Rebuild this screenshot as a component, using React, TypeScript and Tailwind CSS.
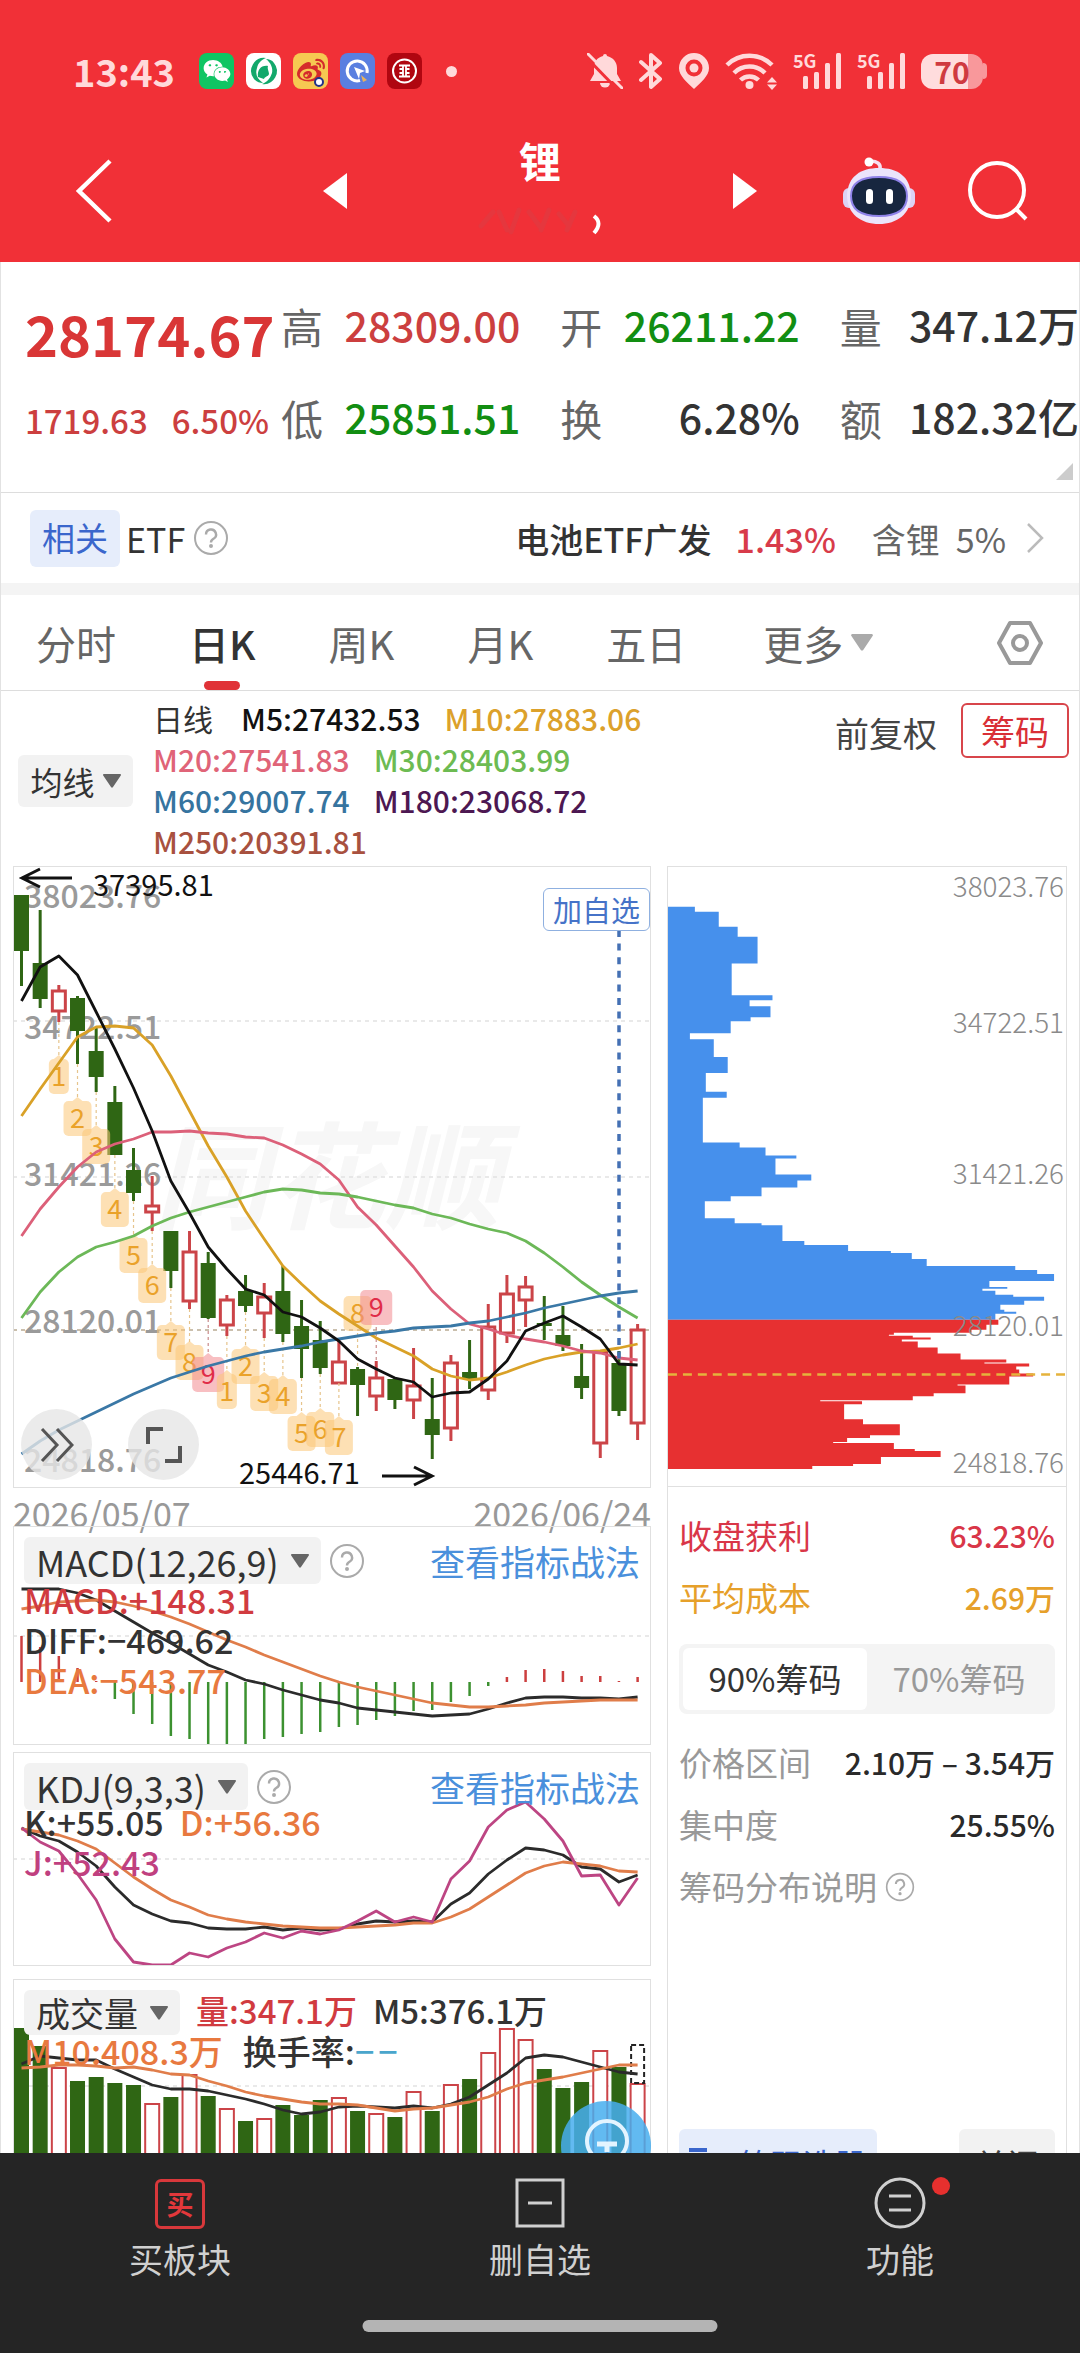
import type { ReactNode } from 'react'
import { FaWeibo, FaWeixin } from 'react-icons/fa'

type Candle = [high: number, top: number, bottom: number, low: number, up: 0 | 1]

const STEP = 18.67
const xAt = (i: number) => 8.5 + i * STEP

const CANDLES: Candle[] = [
  [29, 29, 85, 120, 0], [44, 97, 133, 142, 0], [119, 125, 145, 156, 1], [130, 132, 165, 198, 0],
  [161, 185, 211, 226, 0], [220, 236, 289, 289, 0], [282, 304, 327, 335, 0], [310, 340, 346, 365, 1],
  [365, 365, 405, 422, 0], [365, 386, 435, 443, 1], [386, 397, 452, 453, 0], [429, 434, 459, 470, 1],
  [409, 425, 440, 446, 0], [417, 431, 447, 472, 1], [400, 425, 468, 476, 0], [434, 460, 483, 512, 0],
  [455, 474, 502, 508, 0], [472, 496, 517, 517, 1], [501, 503, 519, 550, 0], [495, 512, 530, 545, 1],
  [512, 513, 534, 543, 0], [482, 520, 534, 553, 1], [512, 553, 569, 593, 0], [489, 497, 562, 575, 1],
  [474, 506, 513, 523, 0], [438, 461, 524, 534, 1], [409, 428, 467, 477, 1], [410, 421, 434, 461, 1],
  [430, 457, 460, 474, 0], [440, 469, 480, 485, 0], [478, 510, 522, 533, 0], [486, 486, 577, 592, 1],
  [485, 497, 545, 550, 0], [458, 464, 557, 574, 1],
]

const MA_LINES = [
  { color: '#d9a127', ys: [250, 223, 197, 171, 161, 160, 162, 179, 210, 245, 280, 311, 345, 373, 400, 418, 435, 448, 460, 472, 481, 490, 503, 510, 514, 512, 506, 499, 493, 489, 486, 485, 482, 478] },
  { color: '#dc6079', ys: [370, 343, 321, 301, 286, 278, 273, 266, 266, 265, 267, 268, 271, 272, 279, 288, 298, 314, 341, 359, 380, 401, 425, 443, 458, 463, 469, 473, 476, 480, 485, 487, 492, 494] },
  { color: '#6cb858', ys: [452, 426, 406, 391, 381, 376, 370, 360, 352, 346, 341, 336, 331, 326, 323, 324, 327, 328, 331, 335, 339, 342, 348, 352, 358, 363, 367, 375, 387, 401, 416, 429, 441, 452] },
  { color: '#3a78a6', ys: [588, 575, 564, 555, 546, 537, 528, 520, 512, 506, 500, 495, 490, 486, 483, 480, 476, 473, 470, 467, 465, 462, 461, 460, 457, 455, 451, 447, 442, 438, 434, 430, 427, 425] },
  { color: '#111111', ys: [135, 101, 90, 109, 146, 183, 222, 265, 315, 347, 381, 403, 423, 429, 446, 451, 462, 475, 493, 503, 512, 516, 531, 527, 526, 513, 495, 465, 457, 450, 461, 473, 498, 499] },
]

const COUNTS: { i: number; n: number; y: number; above?: boolean }[] = [
  { i: 2, n: 1, y: 190 }, { i: 3, n: 2, y: 232 }, { i: 4, n: 3, y: 260 }, { i: 5, n: 4, y: 323 },
  { i: 6, n: 5, y: 369 }, { i: 7, n: 6, y: 399 }, { i: 8, n: 7, y: 456 }, { i: 9, n: 8, y: 476 },
  { i: 10, n: 9, y: 488 }, { i: 11, n: 1, y: 505 }, { i: 12, n: 2, y: 480 }, { i: 13, n: 3, y: 507 },
  { i: 14, n: 4, y: 510 }, { i: 15, n: 5, y: 547 }, { i: 16, n: 6, y: 543 }, { i: 17, n: 7, y: 551 },
  { i: 18, n: 8, y: 430, above: true }, { i: 19, n: 9, y: 424, above: true },
]

const AXIS = [
  { label: '38023.76', y: 42, chipY: 30 },
  { label: '34722.51', y: 173, chipY: 167 },
  { label: '31421.26', y: 320, chipY: 319 },
  { label: '28120.01', y: 467, chipY: 471 },
  { label: '24818.76', y: 606, chipY: 609 },
]

const MACD_ZERO = 156
const MACD_BARS = [110, 121, 130, 142, 155, 173, 188, 198, 210, 213, 219, 219, 218, 213, 211, 208, 206, 201, 199, 194, 190, 185, 184, 176, 170, 160, 151, 144, 143, 145, 150, 150, 155, 151]
const DIFF = [63, 63, 63, 67, 74, 85, 96, 107, 117, 128, 139, 146, 154, 158, 164, 169, 174, 177, 182, 184, 186, 188, 190, 189, 188, 183, 177, 172, 171, 171, 172, 172, 173, 171]
const DEA = [83, 80, 76, 75, 74, 76, 80, 85, 91, 98, 106, 114, 121, 129, 136, 143, 150, 156, 161, 165, 169, 173, 177, 179, 181, 181, 180, 179, 177, 176, 175, 174, 174, 174]

const KDJ_K = [76, 84, 89, 100, 114, 135, 153, 162, 169, 171, 176, 177, 177, 175, 178, 176, 178, 177, 172, 169, 170, 169, 170, 152, 141, 122, 108, 96, 98, 103, 115, 117, 130, 123]
const KDJ_D = [77, 80, 83, 89, 97, 111, 125, 137, 148, 155, 163, 167, 170, 172, 174, 175, 176, 176, 175, 174, 173, 171, 171, 165, 157, 145, 133, 121, 114, 110, 112, 114, 119, 120]
const KDJ_J = [76, 90, 99, 122, 148, 187, 210, 213, 213, 201, 205, 196, 190, 181, 186, 179, 182, 178, 169, 159, 170, 165, 170, 127, 109, 75, 58, 50, 67, 89, 124, 123, 153, 126]

const VOLUME = [49, 67, 89, 102, 98, 104, 106, 125, 118, 96, 117, 130, 142, 140, 126, 136, 121, 119, 132, 135, 138, 113, 132, 106, 100, 74, 50, 61, 90, 109, 103, 72, 88, 105]
const VOL_M5 = [85, 77, 79, 81, 81, 90, 98, 106, 110, 110, 112, 116, 120, 125, 131, 135, 133, 128, 127, 128, 129, 127, 129, 125, 118, 106, 94, 79, 76, 78, 83, 88, 93, 95]
const VOL_M10 = [89, 88, 86, 86, 87, 89, 88, 91, 95, 96, 102, 107, 113, 117, 120, 123, 125, 125, 126, 129, 132, 130, 129, 126, 123, 118, 110, 104, 101, 98, 94, 90, 86, 86]

// [start y, width] of every price level in the chip distribution
const CHIPS_LOSS = [[40, 27], [45, 51], [60, 70], [70, 90], [97, 64], [129, 105], [134, 82], [140, 103], [151, 83], [155, 63], [167, 22], [173, 46], [191, 60], [207, 38], [226, 59], [232, 35], [277, 72], [282, 98], [290, 129], [293, 108], [309, 144], [315, 130], [322, 94], [331, 63], [336, 37], [353, 67], [358, 94], [360, 115], [376, 137], [380, 181], [386, 224], [388, 245], [394, 260], [401, 349], [405, 371], [409, 388], [416, 323], [422, 341], [424, 316], [426, 329], [430, 347], [432, 378], [436, 358], [440, 334], [445, 338], [447, 350], [449, 329]]
const CHIPS_GAIN = [[455, 332], [460, 320], [465, 305], [468, 227], [470, 222], [471, 246], [473, 264], [475, 235], [477, 251], [483, 271], [489, 294], [495, 340], [498, 318], [499, 363], [502, 350], [505, 353], [509, 367], [512, 343], [520, 291], [521, 299], [529, 267], [532, 246], [536, 153], [537, 195], [540, 177], [555, 196], [560, 233], [571, 203], [574, 180], [578, 166], [579, 227], [585, 248], [587, 274], [593, 214], [600, 186], [602, 145]]

const QUOTES = [
  [{ label: '高', value: '28309.00', cls: 'text-[#cc3f3f]' }, { label: '低', value: '25851.51', cls: 'text-[#128e12]' }],
  [{ label: '开', value: '26211.22', cls: 'text-[#128e12]' }, { label: '换', value: '6.28%', cls: 'text-[#333333]' }],
  [{ label: '量', value: '347.12万', cls: 'text-[#333333]' }, { label: '额', value: '182.32亿', cls: 'text-[#333333]' }],
]

const TABS = ['分时', '日K', '周K', '月K', '五日']

function chipPath(levels: number[][], end: number) {
  let d = `M0 ${levels[0][0]}`
  levels.forEach(([y, w], i) => {
    const next = i + 1 < levels.length ? levels[i + 1][0] : end
    d += `L${w} ${y}L${w} ${next}`
  })
  return `${d}L0 ${end}Z`
}

function Line({ ys, color, width = 2.8 }: { ys: number[]; color: string; width?: number }) {
  return (
    <polyline
      points={ys.map((y, i) => `${xAt(i)},${y}`).join(' ')}
      fill="none"
      stroke={color}
      strokeWidth={width}
      strokeLinejoin="round"
    />
  )
}

function GridLine({ y, color = '#e2e2e2' }: { y: number; color?: string }) {
  return <line x1="0" x2="638" y1={y} y2={y} stroke={color} strokeWidth="1.5" strokeDasharray="4 4" />
}

function Caret({ className = 'w-[18px] text-[#666666]' }: { className?: string }) {
  return (
    <svg viewBox="0 0 18 14" className={className} fill="currentColor" aria-hidden="true">
      <path d="M1 0h16a1 1 0 0 1 .8 1.500L10 13a1.200 1.200 0 0 1-2 0L.2 1.500A1 1 0 0 1 1 0z" />
    </svg>
  )
}

function Help({ label, className = 'size-9' }: { label: string; className?: string }) {
  return (
    <button aria-label={label} className={`shrink-0 text-[#aaaaaa] ${className}`}>
      <svg viewBox="0 0 36 36" fill="none" stroke="currentColor" strokeWidth="2">
        <circle cx="18" cy="18" r="16" />
        <path d="M13 14.500a5 5 0 1 1 7.500 4.300c-1.800 1-2.500 1.800-2.500 3.700" strokeWidth="2.400" />
        <circle cx="18" cy="26" r="1" fill="currentColor" />
      </svg>
    </button>
  )
}

function Signal() {
  return (
    <span className="relative block">
      <svg viewBox="0 0 48 38" className="h-[38px] w-12" fill="currentColor" aria-hidden="true">
        <rect x="10" y="24" width="5" height="13" rx="1.500" />
        <rect x="21" y="20" width="5" height="17" rx="1.500" />
        <rect x="32" y="11" width="5" height="26" rx="1.500" />
        <rect x="43" y="1" width="5" height="36" rx="1.500" />
      </svg>
      <span className="absolute -top-1 left-0 text-[18px] leading-6 font-bold">5G</span>
    </span>
  )
}

function StatusBar() {
  return (
    <div className="flex h-9 items-center justify-between pr-[93px] pl-[73px] text-[#ffd9da]">
      <div className="flex items-center gap-3">
        <span className="mr-[12px] text-[38px] leading-9 font-bold">13:43</span>
        <span className="flex h-9 w-[35px] items-center justify-center rounded-lg bg-[#0fc563]">
          <FaWeixin className="size-7 text-white" />
        </span>
        <svg viewBox="0 0 35 36" className="h-9 w-[35px]">
          <rect width="35" height="36" rx="8" fill="#fff" />
          <path d="M20 5A13 13 0 0 0 8 26c3 3 6 4 9 4-6-4-8-9-6-15 1-5 4-8 9-10z" fill="#12a86b" />
          <path d="M16 31a13 13 0 0 0 12-21c-2-3-5-4-8-4 5 4 7 9 6 14-2 6-5 9-10 11z" fill="#12a86b" />
          <path d="M12 24c-1-7 3-12 10-11-1 3 1 5 1 8-1 3-4 2-5 5-2-1-4-1-6-2z" fill="#12a86b" />
        </svg>
        <span className="relative flex h-9 w-[35px] items-center justify-center rounded-lg bg-[#f6c952]">
          <FaWeibo className="size-7 text-[#d52b2b]" />
          <span className="absolute right-1 bottom-0.5 size-2.5 rounded-full border-2 border-[#223388] bg-white" />
        </span>
        <svg viewBox="0 0 35 36" className="h-9 w-[35px]">
          <rect width="35" height="36" rx="8" fill="#5a7fe0" />
          <path d="M20 27.500A10 10 0 1 1 27 20" fill="none" stroke="#fff" strokeWidth="3" />
          <path d="M14 14l11 4-5 2-1 6z" fill="#fff" />
          <path d="M21 22l6 5-4 2z" fill="#e8b25c" />
        </svg>
        <svg viewBox="0 0 35 36" className="h-9 w-[35px]">
          <rect width="35" height="36" rx="8" fill="#b00610" />
          <circle cx="17.500" cy="18" r="11.500" fill="none" stroke="#fff" strokeWidth="2" />
          <path d="M12 12.500h11M12 23.500h11M12.500 16h3.500v4h-3.500M22.500 16h-3.500v4h3.500M16 12.500v3.500M19 12.500v3.500M16 20v3.500M19 20v3.500" fill="none" stroke="#fff" strokeWidth="1.800" />
        </svg>
        <span className="ml-3 size-[11px] rounded-full bg-[#ffd9da]" />
      </div>
      <div className="flex items-center gap-4">
        <svg viewBox="0 0 36 36" className="size-9" fill="currentColor" aria-hidden="true">
          <path d="M16 3a2 2 0 0 1 4 0c6 1.500 10 6 10 12v6l4 7H3l4-7v-6c0-6 3-10.500 9-12z" />
          <path d="M13 30h10a5 4.500 0 0 1-10 0z" />
          <path d="M-1 4l32 33" stroke="#f13037" strokeWidth="3" />
          <path d="M1 1l34 34" stroke="currentColor" strokeWidth="3" strokeLinecap="round" />
        </svg>
        <svg viewBox="0 0 24 38" className="h-[38px] w-6" fill="none" stroke="currentColor" strokeWidth="4" strokeLinejoin="round" strokeLinecap="round">
          <path d="M2 10l19 17-9 8V3l9 8L2 28" />
        </svg>
        <svg viewBox="0 0 30 36" className="h-9 w-[30px]" fill="currentColor" aria-hidden="true">
          <path fillRule="evenodd" d="M15 0a15 15 0 0 1 15 15c0 8-8 14-15 21C8 29 0 23 0 15A15 15 0 0 1 15 0zm0 6.500a8.500 8.500 0 1 0 0 17 8.500 8.500 0 0 0 0-17z" />
          <circle cx="15" cy="15" r="4.500" />
        </svg>
        <svg viewBox="0 0 52 38" className="h-[38px] w-[52px]" fill="none" stroke="currentColor" strokeWidth="4.500" aria-hidden="true">
          <path d="M2 13a32 32 0 0 1 45 0M9 21a22 22 0 0 1 31 0M15.500 28a13 13 0 0 1 18 0" />
          <circle cx="24.500" cy="33" r="4" fill="currentColor" stroke="none" />
          <path d="M47 25l5 5.500H42zM47 38l-5-5.500h10z" fill="currentColor" stroke="none" />
        </svg>
        <Signal />
        <Signal />
        <div className="flex items-center">
          <span className="flex h-[35px] w-[62px] items-center justify-center rounded-xl bg-linear-to-r from-[#ffdcdd] from-75% to-[#f8989b] to-75% text-[30px] leading-8 font-bold text-[#cf3a40]">
            70
          </span>
          <span className="h-4 w-1 rounded-r bg-[#f8989b]" />
        </div>
      </div>
    </div>
  )
}

function Robot() {
  return (
    <svg viewBox="0 0 74 68" className="h-[68px] w-[74px]" aria-hidden="true">
      <path d="M38 12c1-5-3-8-9-8" fill="none" stroke="#f6dff0" strokeWidth="3.500" />
      <circle cx="27" cy="5" r="4.500" fill="#fff" />
      <rect x="1" y="31" width="12" height="20" rx="6" fill="#dcd3f5" />
      <rect x="61" y="31" width="12" height="20" rx="6" fill="#dcd3f5" />
      <path d="M37 11c18 0 31 8 32 27 0 19-14 29-32 29S5 57 5 38c1-19 14-27 32-27z" fill="#ebe4fb" />
      <path d="M37 20c19 0 28 6 28 19s-9 20-28 20S9 52 9 39s9-19 28-19z" fill="#17263f" stroke="#8f82e8" strokeWidth="2" />
      <rect x="24" y="32" width="7" height="15" rx="3.500" fill="#fff" />
      <rect x="44" y="32" width="7" height="15" rx="3.500" fill="#fff" />
    </svg>
  )
}

function TitleBar() {
  return (
    <div className="grid h-[142px] grid-cols-[1fr_434px_1fr] items-center text-white">
      <button aria-label="返回" className="ml-[75px] justify-self-start">
        <svg viewBox="0 0 38 64" className="h-16 w-[38px]" fill="none" stroke="#fff" strokeWidth="4.500">
          <path d="M35 2L4 32l31 30" />
        </svg>
      </button>
      <div className="flex items-center justify-between">
        <button aria-label="上一个">
          <svg viewBox="0 0 24 36" className="h-9 w-6" fill="#fff"><path d="M24 0v36L0 18z" /></svg>
        </button>
        <div className="flex flex-col items-center pb-3">
          <h1 className="text-[42px] leading-[60px] font-bold">锂</h1>
          <svg viewBox="0 0 130 50" className="h-[50px] w-[130px]" aria-hidden="true">
            <g fill="none" stroke="#b8555c" strokeWidth="5" opacity=".2" strokeLinecap="round">
              <path d="M6 36l12-14M24 22l8 18M44 20l-8 22M54 22l12 16M74 20l-8 20M84 24l10 12M100 22l-8 18" />
            </g>
            <path d="M119 26q9 7 0 17" fill="none" stroke="#fff" strokeWidth="4" />
          </svg>
        </div>
        <button aria-label="下一个">
          <svg viewBox="0 0 24 36" className="h-9 w-6" fill="#fff"><path d="M0 0v36l24-18z" /></svg>
        </button>
      </div>
      <div className="flex items-center justify-end gap-[52px] pr-[52px]">
        <button aria-label="智能助手"><Robot /></button>
        <button aria-label="搜索">
          <svg viewBox="0 0 60 60" className="size-[60px]" fill="none" stroke="#fff" strokeWidth="4">
            <circle cx="29" cy="29" r="27" />
            <path d="M48 48l10 10" />
          </svg>
        </button>
      </div>
    </div>
  )
}

function QuoteSummary() {
  return (
    <section className="relative flex border-b border-[#dddddd] pt-[17px] pb-[29px]">
      <div className="w-[256px] shrink-0 pl-6">
        <div className="flex h-23 items-center pt-4 text-[56px] font-bold text-[#d93636]">28174.67</div>
        <div className="flex h-23 items-center gap-6 pt-2 text-[33px] font-medium text-[#cc3f3f]">
          <span>1719.63</span>
          <span>6.50%</span>
        </div>
      </div>
      <div className="ml-6 grid flex-1 grid-cols-3 gap-x-10">
        {QUOTES.map((col) => (
          <dl key={col[0].label}>
            {col.map((q) => (
              <div key={q.label} className="flex h-23 items-center justify-between whitespace-nowrap">
                <dt className="text-[42px] text-[#666666]">{q.label}</dt>
                <dd className={`text-[41px] font-medium ${q.cls}`}>{q.value}</dd>
              </div>
            ))}
          </dl>
        ))}
      </div>
      <svg viewBox="0 0 17 17" className="absolute right-1.5 bottom-3 size-[17px]" fill="#cccccc" aria-hidden="true">
        <path d="M17 0v17H0z" />
      </svg>
    </section>
  )
}

function EtfRow() {
  return (
    <section className="flex h-[90px] items-center justify-between pr-[35px] pl-[29px] text-[34px] text-[#333333]">
      <div className="flex items-center">
        <span className="flex h-[57px] items-center rounded-md bg-[#e6edfb] px-3 text-[33px] text-[#3a66cc]">相关</span>
        <span className="ml-1.5">ETF</span>
        <Help label="ETF说明" className="ml-2 size-9" />
      </div>
      <a href="#etf" className="flex items-center whitespace-nowrap">
        <span className="font-medium">电池ETF广发</span>
        <span className="ml-6 font-medium text-[#d83b4a]">1.43%</span>
        <span className="ml-9 text-[#666666]">含锂</span>
        <span className="ml-4 text-[#666666]">5%</span>
        <svg viewBox="0 0 18 32" className="ml-5 h-8 w-[18px]" fill="none" stroke="#bbbbbb" strokeWidth="2.500" aria-hidden="true">
          <path d="M2 2l14 14L2 30" />
        </svg>
      </a>
    </section>
  )
}

function PeriodTabs() {
  return (
    <nav className="flex h-[96px] items-center border-b border-[#dddddd] px-[35px] text-[40px] text-[#666666]">
      <div className="flex h-full items-center gap-[73px]">
        {TABS.map((tab) => {
          const active = tab === '日K'
          return (
            <button
              key={tab}
              aria-pressed={active}
              className={`relative h-full whitespace-nowrap ${active ? 'font-medium text-[#333333]' : ''}`}
            >
              {tab}
              {active && <span className="absolute bottom-0 left-1/2 h-[9px] w-9 -translate-x-1/2 rounded-full bg-[#e03237]" />}
            </button>
          )
        })}
        <button className="flex h-full items-center gap-2 pl-1 whitespace-nowrap">
          更多
          <Caret className="w-[22px] text-[#aaaaaa]" />
        </button>
      </div>
      <button aria-label="设置" className="ml-auto">
        <svg viewBox="0 0 48 46" className="h-[46px] w-12" fill="none" stroke="#999999" strokeWidth="4" strokeLinejoin="round">
          <path d="M14 3h20l11 20-11 20H14L3 23z" />
          <circle cx="24" cy="23" r="7" />
        </svg>
      </button>
    </nav>
  )
}

function AverageLegend() {
  return (
    <section className="flex pt-[7px] pr-[10px] pb-[2px] pl-[17px]">
      <button className="mt-[57px] flex h-[52px] w-[115px] shrink-0 items-center justify-center gap-2 self-start rounded-md bg-[#f2f2f2] text-[32px] whitespace-nowrap text-[#333333]">
        均线
        <Caret />
      </button>
      <div className="ml-5 flex-1 text-[30px] leading-[41px] font-medium">
        <div className="flex gap-6">
          <span className="mr-1 font-normal text-[#333333]">日线</span>
          <span className="text-[#111111]">M5:27432.53</span>
          <span className="text-[#dca12b]">M10:27883.06</span>
        </div>
        <div className="flex gap-6 text-[#e06478]">
          <span>M20:27541.83</span>
          <span className="text-[#6dbb52]">M30:28403.99</span>
        </div>
        <div className="flex gap-6 text-[#36749f]">
          <span>M60:29007.74</span>
          <span className="text-[#4d1852]">M180:23068.72</span>
        </div>
        <div className="text-[#a8513f]">M250:20391.81</div>
      </div>
      <div className="flex items-start gap-6 pt-[5px] text-[34px] leading-[51px]">
        <button className="pt-1 text-[#444444]">前复权</button>
        <button className="rounded-md border-2 border-[#d8454b] px-[18px] text-[#d92f36]">筹码</button>
      </div>
    </section>
  )
}

function Count({ i, n, y, above }: { i: number; n: number; y: number; above?: boolean }) {
  const red = n === 9
  const w = n === 1 ? 20 : red ? 32 : 28
  const x = xAt(i)
  const low = CANDLES[i][3]
  return (
    <g>
      <line
        x1={x}
        x2={x}
        y1={above ? y + 37 : low}
        y2={above ? CANDLES[i][0] : y}
        stroke={red ? '#c98a8a' : '#e6c48c'}
        strokeWidth="1.200"
        strokeDasharray="3 3"
      />
      <rect x={x - w / 2} y={above ? y : y + 3} width={w} height="35" rx="5" fill={red ? '#f28b8f' : '#fbc777'} opacity=".55" />
      {!above && <path d={`M${x - 5} ${y + 3}L${x} ${y - 1}L${x + 5} ${y + 3}z`} fill={red ? '#f28b8f' : '#fbc777'} opacity=".55" />}
      <text x={x} y={y + (above ? 27 : 30)} textAnchor="middle" fontSize="27" fill={red ? '#e02c48' : '#eaa22a'}>
        {n}
      </text>
    </g>
  )
}

function PriceChart() {
  return (
    <div className="relative outline-1 -outline-offset-1 outline-[#e0e0e0]">
      <svg viewBox="0 0 638 622" className="block w-full" role="img" aria-label="日K线图">
        <text x="140" y="354" fontSize="116" fontWeight="700" fontStyle="italic" fill="#f7f7f7">同花顺</text>
        <GridLine y={155} />
        <GridLine y={311} />
        <GridLine y={464} color="#b9ab93" />
        {AXIS.map((a) => (
          <text key={a.label} x="11" y={a.y} fontSize="32" fontWeight="500" fill="#9a9a9a">{a.label}</text>
        ))}
        {CANDLES.map(([high, top, bottom, low, up], i) => (
          <g key={i} stroke={up ? '#cb4448' : '#2f6614'} strokeWidth="3">
            <line x1={xAt(i)} x2={xAt(i)} y1={high} y2={top} />
            <line x1={xAt(i)} x2={xAt(i)} y1={bottom} y2={low} />
            {up ? (
              <rect x={xAt(i) - 6.500} y={top} width="13" height={bottom - top} fill="#fff" />
            ) : (
              <rect x={xAt(i) - 7.500} y={top} width="15" height={bottom - top} fill="#2f6614" stroke="none" />
            )}
          </g>
        ))}
        {COUNTS.map((c) => (
          <Count key={c.i} {...c} />
        ))}
        {MA_LINES.map((l) => (
          <Line key={l.color} {...l} />
        ))}
        <line x1="606" x2="606" y1="64" y2="497" stroke="#4470b4" strokeWidth="3.500" strokeDasharray="7 6.600" />
        <g fontSize="29" fill="#111">
          <text x="80" y="30">37395.81</text>
          <text x="226" y="618">25446.71</text>
        </g>
        <g fill="none" stroke="#111" strokeWidth="3">
          <path d="M59 12H9M27 3L9 12l18 9" />
          <path d="M369 610h50M401 601l18 9-18 9" />
        </g>
      </svg>
      <button className="absolute top-[22px] right-[1px] flex h-[43px] items-center rounded-md border border-[#8fb0e0] bg-white px-[9px] text-[29px] text-[#4673c8]">
        加自选
      </button>
      <div className="absolute bottom-2 left-2 flex gap-9">
        <button aria-label="展开" className="flex size-[71px] items-center justify-center rounded-full bg-[#e6e6e6]/80">
          <svg viewBox="0 0 34 34" className="size-[34px]" fill="none" stroke="#555" strokeWidth="3">
            <path d="M2 1l15 16L2 33M17 1l15 16-15 16" />
          </svg>
        </button>
        <button aria-label="全屏" className="flex size-[71px] items-center justify-center rounded-full bg-[#e6e6e6]/80">
          <svg viewBox="0 0 36 36" className="size-9" fill="none" stroke="#555" strokeWidth="4">
            <path d="M2 17V2h15M34 19v15H19" />
          </svg>
        </button>
      </div>
    </div>
  )
}

function IndicatorPanel({ label, height, chart, children }: { label: string; height: number; chart: ReactNode; children: ReactNode }) {
  return (
    <div className="relative text-[34px] outline-1 -outline-offset-1 outline-[#e0e0e0]">
      <svg viewBox={`0 0 638 ${height}`} className="block w-full" role="img" aria-label={label}>
        {chart}
      </svg>
      <div className="absolute inset-x-0 top-0 px-[11px] pt-[11px]">{children}</div>
    </div>
  )
}

function IndicatorHeader({ name }: { name: string }) {
  return (
    <div className="flex items-center justify-between whitespace-nowrap">
      <div className="flex items-center gap-2">
        <button className="flex h-[47px] items-center gap-3 rounded-md bg-[#f2f2f2] px-3 text-[36px] text-[#333333]">
          {name}
          <Caret />
        </button>
        <Help label={`${name}说明`} />
      </div>
      <a href="#strategy" className="text-[35px] leading-[47px] text-[#4a90dc]">查看指标战法</a>
    </div>
  )
}

function MacdPanel() {
  return (
    <IndicatorPanel
      label="MACD"
      height={219}
      chart={
        <>
          <GridLine y={110} />
          {MACD_BARS.map((y, i) => (
            <line key={i} x1={xAt(i)} x2={xAt(i)} y1={MACD_ZERO} y2={y} stroke={y < MACD_ZERO ? '#cc3f3f' : '#3c9130'} strokeWidth="2.500" />
          ))}
          <Line ys={DIFF} color="#2b2b2b" />
          <Line ys={DEA} color="#e07d4a" />
        </>
      }
    >
      <IndicatorHeader name="MACD(12,26,9)" />
      <div className="-mt-1 leading-10 font-medium">
        <div className="text-[#d13b40]">MACD:+148.31</div>
        <div className="text-[#333333]">DIFF:−469.62</div>
        <div className="text-[#e8793f]">DEA:−543.77</div>
      </div>
    </IndicatorPanel>
  )
}

function KdjPanel() {
  return (
    <IndicatorPanel
      label="KDJ"
      height={214}
      chart={
        <>
          <GridLine y={107} />
          <Line ys={KDJ_K} color="#2b2b2b" />
          <Line ys={KDJ_D} color="#e07d4a" />
          <Line ys={KDJ_J} color="#bd4583" />
        </>
      }
    >
      <IndicatorHeader name="KDJ(9,3,3)" />
      <div className="-mt-2 leading-10 font-medium">
        <div className="flex gap-4">
          <span className="text-[#333333]">K:+55.05</span>
          <span className="text-[#e8793f]">D:+56.36</span>
        </div>
        <div className="text-[#c0407f]">J:+52.43</div>
      </div>
    </IndicatorPanel>
  )
}

function VolumePanel() {
  return (
    <IndicatorPanel
      label="成交量"
      height={214}
      chart={
        <>
          <GridLine y={107} />
          {VOLUME.map((y, i) =>
            CANDLES[i][4] ? (
              <rect key={i} x={xAt(i) - 7} y={y} width="14" height={214 - y} fill="#fff" stroke="#cb4448" strokeWidth="2" />
            ) : (
              <rect key={i} x={xAt(i) - 7.500} y={y} width="15" height={214 - y} fill="#2f6614" />
            ),
          )}
          <rect x={xAt(33) - 6.500} y="66" width="13" height="38" fill="none" stroke="#222" strokeWidth="2" strokeDasharray="5 3" />
          <Line ys={VOL_M5} color="#2b2b2b" />
          <Line ys={VOL_M10} color="#e07d4a" />
        </>
      }
    >
      <div className="flex items-start gap-4 whitespace-nowrap">
        <button className="flex h-[45px] items-center gap-3 rounded-md bg-[#f2f2f2] px-3 text-[#333333]">
          成交量
          <Caret />
        </button>
        <span className="text-[33px] leading-10 font-medium text-[#d13b40]">量:347.1万</span>
        <span className="text-[33px] leading-10 font-medium text-[#333333]">M5:376.1万</span>
      </div>
      <div className="-mt-1 flex gap-5 leading-10 font-medium">
        <span className="text-[#e8793f]">M10:408.3万</span>
        <span className="flex text-[#333333]">
          换手率:
          <span className="flex gap-1 text-[#4aa5cc]">
            <span>−</span>
            <span>−</span>
          </span>
        </span>
      </div>
      <button aria-label="快捷交易" className="absolute top-[122px] right-0 size-[90px] rounded-full bg-[#46aeef]/85">
        <svg viewBox="0 0 90 90" fill="none" stroke="#e3f4ff" strokeWidth="4">
          <circle cx="46" cy="40" r="20" />
          <path d="M36 43h20M46 43v8" strokeWidth="5" />
        </svg>
      </button>
    </IndicatorPanel>
  )
}

function ChipChart() {
  return (
    <svg viewBox="0 0 400 622" className="block w-full border-y border-[#e0e0e0]" role="img" aria-label="筹码分布">
      <path d={chipPath(CHIPS_LOSS, 455)} fill="#4690ec" />
      <path d={chipPath(CHIPS_GAIN, 605)} fill="#e73031" />
      <line x1="0" x2="400" y1="510" y2="510" stroke="#e5b33c" strokeWidth="2.500" strokeDasharray="9 6" />
      {AXIS.map((a) => (
        <text key={a.label} x="398" y={a.chipY} textAnchor="end" fontSize="28" fontWeight="300" fill="#8a8a8a">
          {a.label}
        </text>
      ))}
    </svg>
  )
}

function ChipRow({ label, value, cls }: { label: string; value: string; cls: string }) {
  return (
    <div className={`flex h-[62px] items-center justify-between whitespace-nowrap ${cls}`}>
      <dt className="text-[33px]">{label}</dt>
      <dd className="text-[30px] font-medium">{value}</dd>
    </div>
  )
}

function ChipColumn() {
  return (
    <aside className="border-x border-[#e0e0e0]">
      <ChipChart />
      <div className="px-[11px] pt-[18px]">
        <dl>
          <ChipRow label="收盘获利" value="63.23%" cls="text-[#d93648]" />
          <ChipRow label="平均成本" value="2.69万" cls="text-[#e6a02a]" />
        </dl>
        <div className="mt-[15px] mb-[18px] flex h-[70px] rounded-lg bg-[#f4f4f4] p-1 text-[33px] whitespace-nowrap">
          <button aria-pressed="true" className="flex-1 rounded-md bg-white text-[#333333]">90%筹码</button>
          <button aria-pressed="false" className="flex-1 text-[#999999]">70%筹码</button>
        </div>
        <dl className="text-[#999999]">
          <ChipRow label="价格区间" value="2.10万 – 3.54万" cls="[&>dd]:text-[#2a2a2a]" />
          <ChipRow label="集中度" value="25.55%" cls="[&>dd]:text-[#2a2a2a]" />
        </dl>
        <div className="flex h-[62px] items-center gap-2 text-[33px] text-[#999999]">
          筹码分布说明
          <Help label="筹码分布说明" className="size-[30px]" />
        </div>
        <div className="mt-[211px] flex justify-between text-[32px] whitespace-nowrap">
          <button className="flex h-[68px] items-center gap-5 rounded-md bg-[#e6edfb] px-2.5 text-[#3a66cc]">
            <svg viewBox="0 0 30 30" className="size-[30px]" fill="none" stroke="currentColor" strokeWidth="4">
              <path d="M0 2h18M0 14h24M0 26h12" />
            </svg>
            筹码选股
          </button>
          <button className="h-[68px] rounded-md bg-[#f2f2f2] px-4 text-[#444444]">关闭</button>
        </div>
      </div>
    </aside>
  )
}

function BottomNav() {
  return (
    <footer className="relative z-10 h-[200px] shrink-0 bg-[#252525] pt-6 text-[34px] text-[#d0d0d0]">
      <nav className="grid grid-cols-3">
        <button className="flex flex-col items-center gap-[5px]">
          <span className="mt-0.5 flex size-[50px] items-center justify-center rounded-md border-3 border-[#d8383b] text-[27px] leading-8 font-bold text-[#e2383b]">
            买
          </span>
          <span className="leading-[50px]">买板块</span>
        </button>
        <button className="flex flex-col items-center gap-[5px]">
          <svg viewBox="0 0 52 52" className="size-[52px]" fill="none" stroke="currentColor" strokeWidth="3">
            <path d="M3 3h46v46H3zM14 26h24" />
          </svg>
          <span className="leading-[50px]">删自选</span>
        </button>
        <button className="flex flex-col items-center gap-[5px]">
          <span className="relative">
            <svg viewBox="0 0 52 52" className="size-[52px]" fill="none" stroke="currentColor" strokeWidth="3">
              <circle cx="26" cy="26" r="24" />
              <path d="M15 19h22M15 33h22" />
            </svg>
            <span className="absolute top-0 -right-6 size-[18px] rounded-full bg-[#e6302e]" />
          </span>
          <span className="leading-[50px]">功能</span>
        </button>
      </nav>
      <div className="absolute bottom-[21px] left-1/2 h-3 w-[355px] -translate-x-1/2 rounded-full bg-[#b4b4b4]" />
    </footer>
  )
}

export default function App() {
  return (
    <div className="flex h-screen flex-col overflow-hidden bg-white font-['Noto_Sans_CJK_SC',sans-serif]">
      <header className="shrink-0 bg-[#f13037] pt-[53px]">
        <StatusBar />
        <div className="pt-[31px]">
          <TitleBar />
        </div>
      </header>

      <main className="min-h-0 flex-1 overflow-hidden border-x border-[#e2e2e2]">
        <QuoteSummary />
        <EtfRow />
        <div className="h-3 bg-[#f4f4f4]" />
        <PeriodTabs />
        <AverageLegend />

        {/* Charts on the left, chip distribution on the right */}
        <section className="mt-[2px] grid grid-cols-[638fr_400fr] gap-4 px-3">
          <div>
            <PriceChart />
            <div className="flex h-[38px] items-center justify-between pt-3 text-[34px] leading-[38px] text-[#999999]">
              <span>2026/05/07</span>
              <span>2026/06/24</span>
            </div>
            <MacdPanel />
            <div className="mt-[7px]">
              <KdjPanel />
            </div>
            <div className="mt-[13px]">
              <VolumePanel />
            </div>
          </div>
          <ChipColumn />
        </section>
      </main>

      <BottomNav />
    </div>
  )
}
